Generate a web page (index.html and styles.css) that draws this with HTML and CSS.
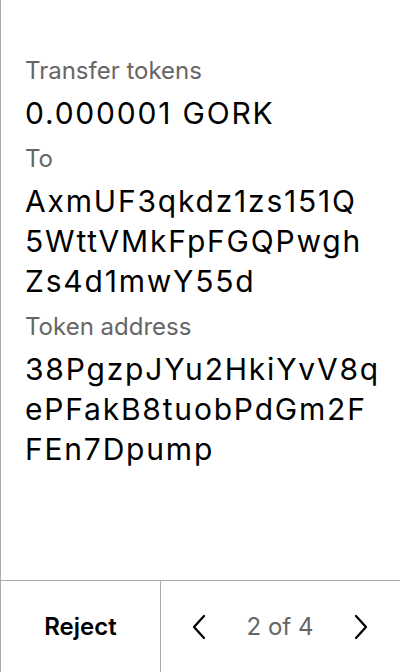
FILE: index.html
```html
<!DOCTYPE html>
<html>
<head>
<meta charset="utf-8">
<link rel="stylesheet" href="styles.css">
</head>
<body>
<div class="screen">
  <main class="content">
    <div class="label">Transfer tokens</div>
    <div class="value">0.000001 GORK</div>
    <div class="label">To</div>
    <div class="value"><span class="line">AxmUF3qkdz1zs151Q</span><span class="line">5WttVMkFpFGQPwgh</span><span class="line">Zs4d1mwY55d</span></div>
    <div class="label">Token address</div>
    <div class="value"><span class="line">38PgzpJYu2HkiYvV8q</span><span class="line">ePFakB8tuobPdGm2F</span><span class="line">FEn7Dpump</span></div>
  </main>
  <footer class="bar">
    <button class="reject">Reject</button>
    <div class="pager">
      <button class="nav" aria-label="Previous">
        <svg width="16" height="26" viewBox="0 0 16 26"><path d="M13 2 L3 13 L13 24" fill="none" stroke="#000" stroke-width="2.3" stroke-linecap="round" stroke-linejoin="round"/></svg>
      </button>
      <span class="count">2 of 4</span>
      <button class="nav" aria-label="Next">
        <svg width="16" height="26" viewBox="0 0 16 26"><path d="M3 2 L13 13 L3 24" fill="none" stroke="#000" stroke-width="2.3" stroke-linecap="round" stroke-linejoin="round"/></svg>
      </button>
    </div>
  </footer>
</div>
</body>
</html>
```
FILE: styles.css
```css
* { box-sizing: border-box; }
html, body { margin: 0; padding: 0; background: #fff; }
body { font-family: Inter, "Noto Sans", sans-serif; color: #000; }
.screen {
  width: 400px;
  height: 672px;
  border-left: 1px solid #aaa;
  display: flex;
  flex-direction: column;
}
.content {
  flex: 1;
  padding: 55px 20px 0 24px;
  display: flex;
  flex-direction: column;
  gap: 6px;
}
.label {
  font-size: 24px;
  line-height: 32px;
  color: #666;
}
.value {
  font-size: 30px;
  line-height: 40px;
  letter-spacing: 1.8px;
  white-space: nowrap;
  color: #000;
  margin-bottom: 4px;
}
.line { display: block; }
.bar {
  height: 92px;
  border-top: 1px solid #aaa;
  display: flex;
}
.reject {
  width: 160px;
  border: 0;
  border-right: 1px solid #aaa;
  background: none;
  font: 600 24px Inter, sans-serif;
  color: #000;
  padding: 0;
}
.pager {
  flex: 1;
  display: flex;
  align-items: center;
  justify-content: space-between;
  padding: 0 31px 0 30px;
}
.nav {
  border: 0;
  background: none;
  padding: 0;
  display: flex;
}
.count {
  font-size: 24px;
  color: #666;
}
```
